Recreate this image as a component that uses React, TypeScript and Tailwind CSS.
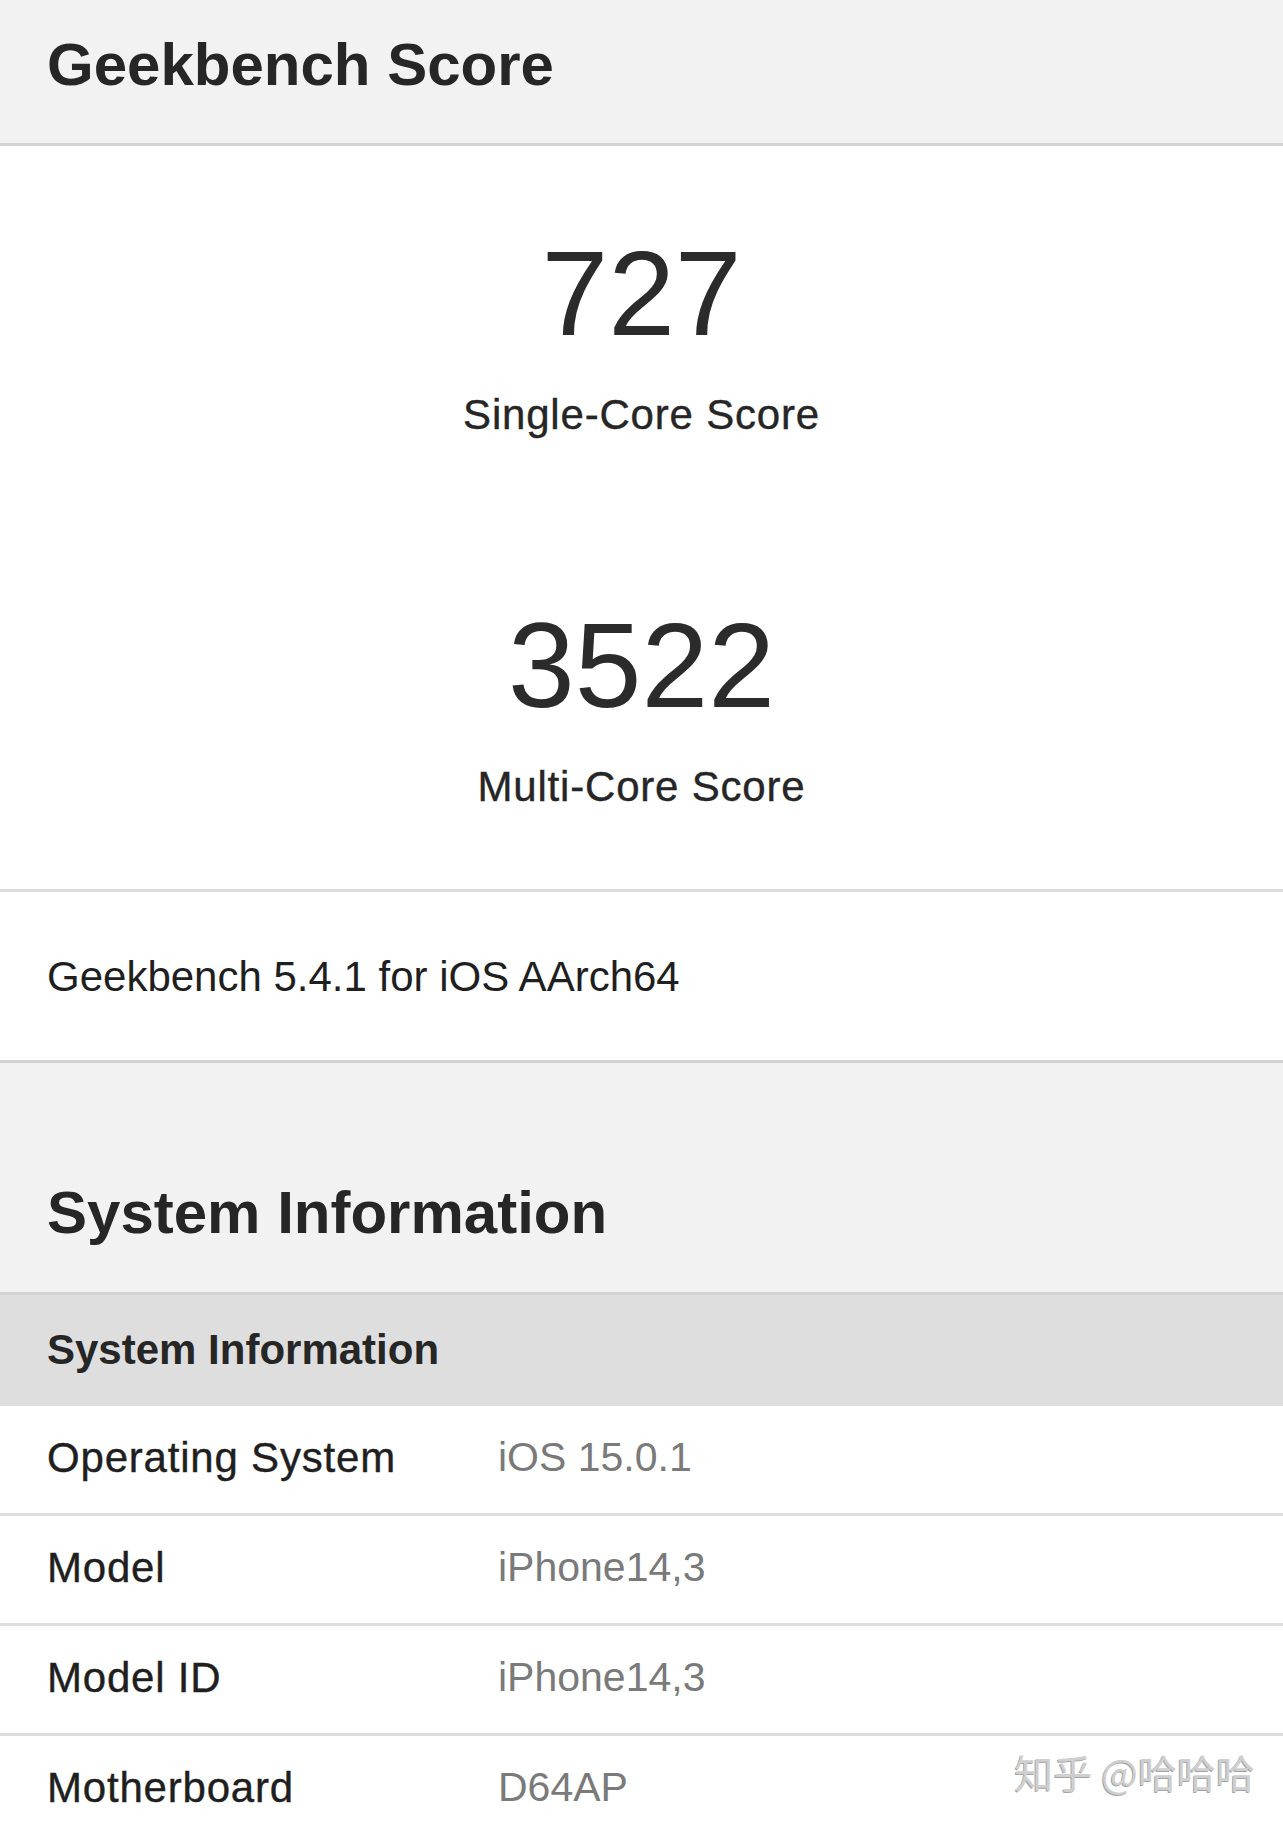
const rows = [
  { label: 'Operating System', value: 'iOS 15.0.1' },
  { label: 'Model', value: 'iPhone14,3' },
  { label: 'Model ID', value: 'iPhone14,3' },
  { label: 'Motherboard', value: 'D64AP' },
];

// Etiquetas con peso "medium" (simulado con trazo fino)
const etiqueta = 'text-[42px] leading-none tracking-[0.8px] [-webkit-text-stroke:0.4px_currentColor]';

const App = () => {
  return (
    <div className="relative h-[1824px] overflow-hidden bg-white text-[#262626] font-['Liberation_Sans',Arial,sans-serif]">
      {/* Cabecera */}
      <div className="h-[146px] bg-[#f2f2f2] border-b-[3px] border-[#d2d2d2] pl-[47px] pt-[35px]">
        <h1 className="text-[60px] leading-none font-bold">Geekbench Score</h1>
      </div>

      {/* Puntuaciones */}
      <div className="flex flex-col items-center pt-[87px] pb-[81px] border-b-[3px] border-[#dcdcdc]">
        <div className="text-[120px] leading-none text-[#2b2b2b]">727</div>
        <div className={`mt-[41px] ${etiqueta}`}>Single-Core Score</div>
        <div className="mt-[169px] text-[120px] leading-none text-[#2b2b2b]">3522</div>
        <div className={`mt-[41px] ${etiqueta}`}>Multi-Core Score</div>
      </div>

      <div className="pl-[47px] pt-[64px] pb-[62px] border-b-[3px] border-[#d2d2d2]">
        <div className="text-[42px] leading-none text-[#1f1f1f]">Geekbench 5.4.1 for iOS AArch64</div>
      </div>

      {/* Información del sistema */}
      <div className="bg-[#f2f2f2] pl-[47px] pt-[120px] pb-[49px] border-b-[3px] border-[#d2d2d2]">
        <h2 className="text-[60px] leading-none font-bold">System Information</h2>
      </div>
      <div className="bg-[#dedede] pl-[47px] pt-[34px] pb-[35px]">
        <div className="text-[42px] leading-none font-bold">System Information</div>
      </div>

      {rows.map(row => (
        <div key={row.label} className="flex pl-[47px] pt-[31px] pb-[34px] border-b-[3px] border-[#dedede]">
          <div className={`w-[451px] shrink-0 text-[#1f1f1f] ${etiqueta}`}>{row.label}</div>
          <div className="text-[41px] leading-none text-[#7a7a7a]">{row.value}</div>
        </div>
      ))}

      {/* Marca de agua */}
      <div className="absolute right-[28px] bottom-[33px] text-[39px] leading-none text-[#cfcfcf] font-['Noto_Sans_CJK_SC',sans-serif] [text-shadow:-1px_1px_0_#a5a5a5]">
        知乎 @哈哈哈
      </div>
    </div>
  );
};

export default App;
